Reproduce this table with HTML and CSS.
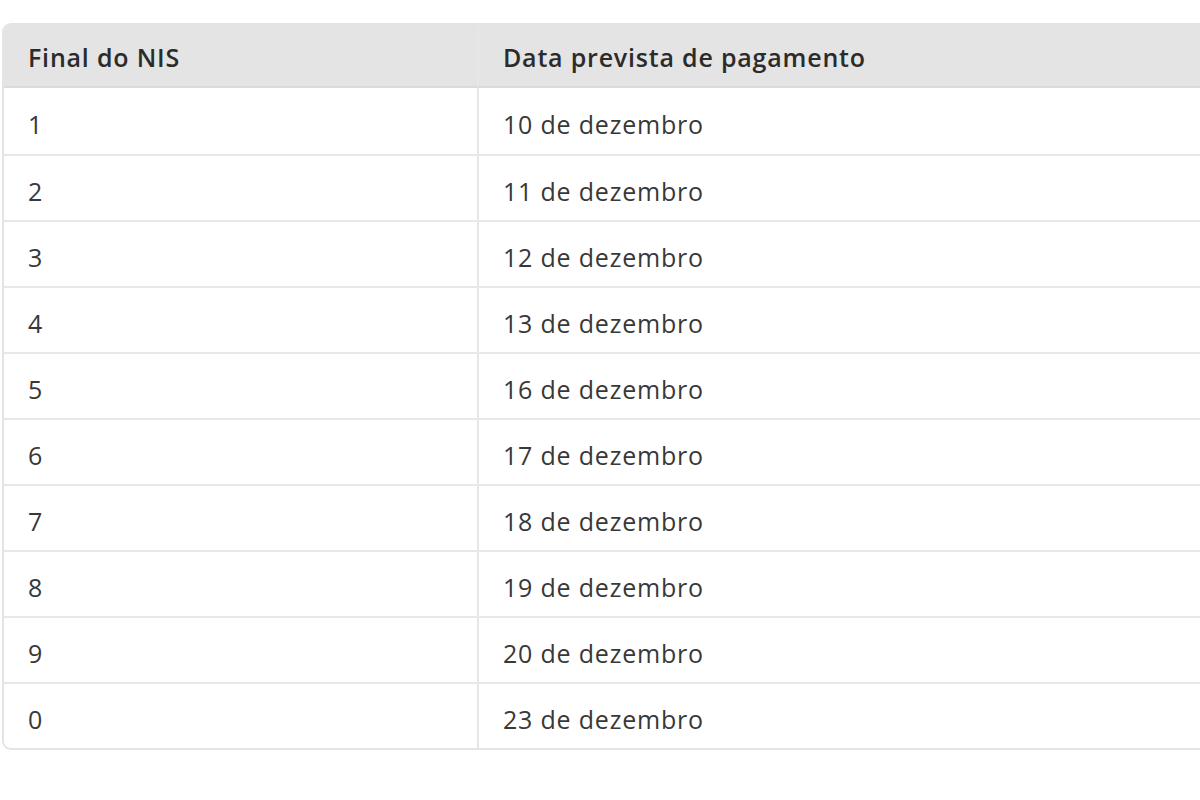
FILE: index.html
```html
<!DOCTYPE html>
<html lang="pt-BR">
<head>
<meta charset="utf-8">
<title>Calendário de pagamento</title>
<link rel="stylesheet" href="styles.css">
</head>
<body>
<div class="wrap">
  <table class="nis-table">
    <thead>
      <tr><th class="col-nis">Final do NIS</th><th>Data prevista de pagamento</th></tr>
    </thead>
    <tbody>
      <tr><td>1</td><td>10 de dezembro</td></tr>
      <tr><td>2</td><td>11 de dezembro</td></tr>
      <tr><td>3</td><td>12 de dezembro</td></tr>
      <tr><td>4</td><td>13 de dezembro</td></tr>
      <tr><td>5</td><td>16 de dezembro</td></tr>
      <tr><td>6</td><td>17 de dezembro</td></tr>
      <tr><td>7</td><td>18 de dezembro</td></tr>
      <tr><td>8</td><td>19 de dezembro</td></tr>
      <tr><td>9</td><td>20 de dezembro</td></tr>
      <tr><td>0</td><td>23 de dezembro</td></tr>
    </tbody>
  </table>
</div>
</body>
</html>
```
FILE: styles.css
```css
html, body {
  margin: 0;
  padding: 0;
  background: #ffffff;
}
body {
  overflow: hidden;
  width: 1200px;
  height: 800px;
}
.wrap {
  padding: 23px 0 0 2px;
  width: 1230px;
}
.nis-table {
  width: 1220px;
  border-collapse: separate;
  border-spacing: 0;
  border: 2px solid #e4e4e4;
  border-radius: 9px;
  overflow: hidden;
  font-family: "Open Sans", "Noto Sans", sans-serif;
  font-size: 25px;
  letter-spacing: 0.8px;
  color: #383838;
  table-layout: fixed;
}
.nis-table th,
.nis-table td {
  text-align: left;
  padding: 0 0 0 24px;
  box-sizing: border-box;
  vertical-align: middle;
}
.nis-table th {
  background: #e4e4e4;
  font-weight: 600;
  color: #2b2b2b;
  height: 63px;
  padding-top: 2px;
  border-bottom: 2px solid #dadada;
}
.nis-table th.col-nis {
  width: 475px;
}
.nis-table th:first-child,
.nis-table td:first-child {
  border-right: 2px solid #e6e6e6;
}
.nis-table td {
  height: 66px;
  padding-top: 5px;
}
.nis-table tbody tr + tr td {
  border-top: 2px solid #e8e8e8;
}
```
